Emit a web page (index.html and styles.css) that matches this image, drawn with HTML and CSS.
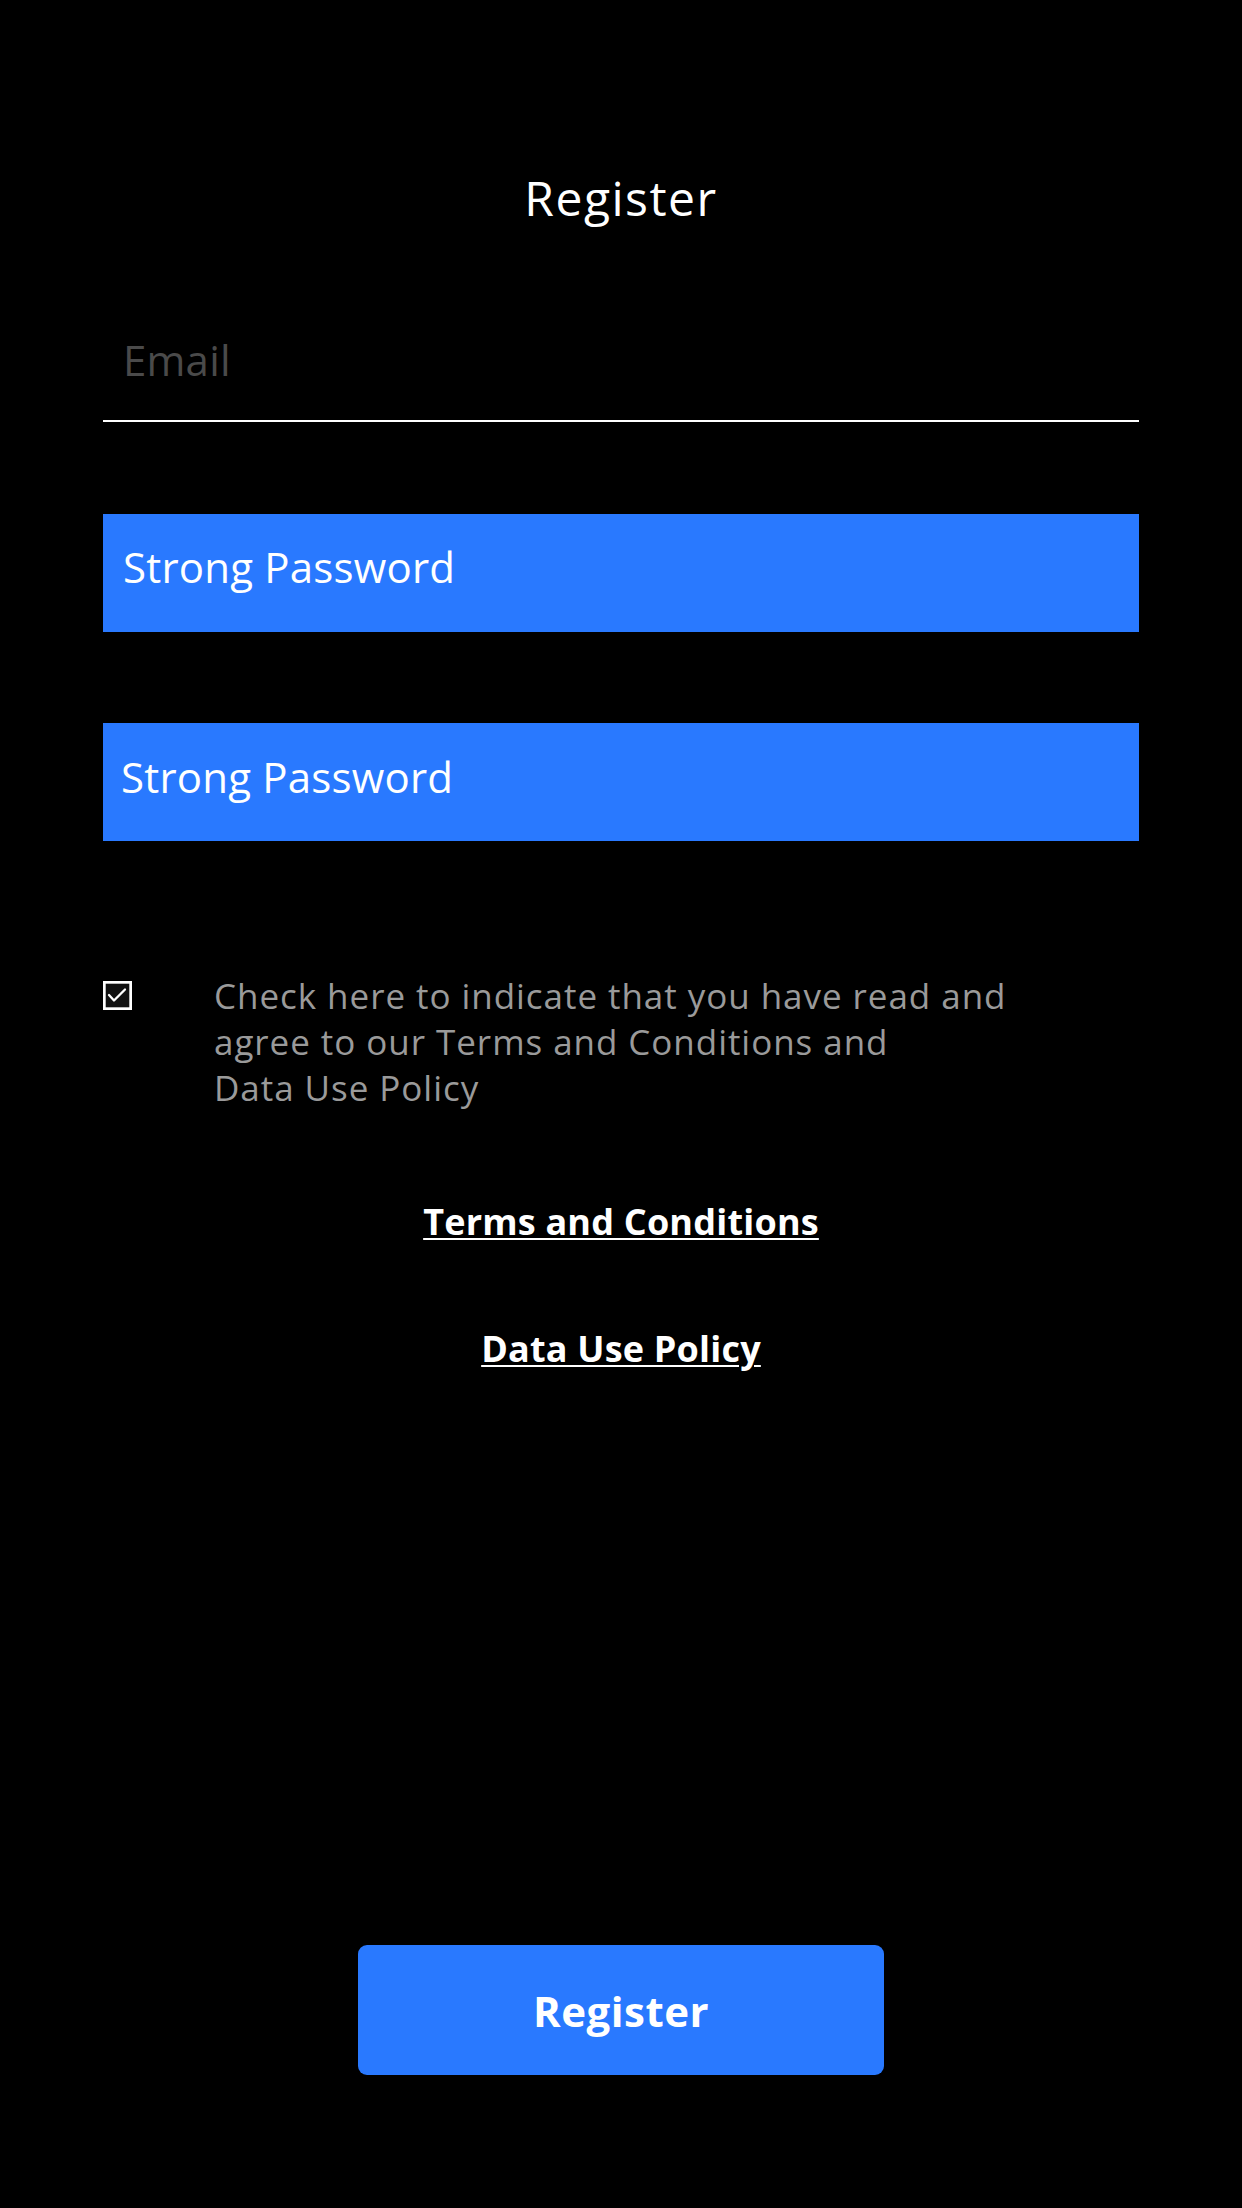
FILE: index.html
```html
<!DOCTYPE html>
<html lang="en">
<head>
<meta charset="utf-8">
<title>Register</title>
<link rel="stylesheet" href="styles.css">
</head>
<body>
<main class="page">
  <h1 class="title">Register</h1>
  <div class="field field-line"><span class="placeholder">Email</span></div>
  <div class="field field-filled"><span class="value">Strong Password</span></div>
  <div class="field field-filled field-second"><span class="value">Strong Password</span></div>
  <div class="agree">
    <svg class="checkbox" width="29" height="29" viewBox="0 0 29 29" aria-hidden="true">
      <rect x="1.35" y="1.35" width="26.3" height="26.3" fill="#111" stroke="#fff" stroke-width="2.7"/>
      <polyline points="6,14 11,19.5 22,8.5" fill="none" stroke="#fff" stroke-width="2.3" stroke-linecap="round" stroke-linejoin="round"/>
    </svg>
    <p class="agree-text">Check here to indicate that you have read and<br>agree to our Terms and Conditions and<br>Data Use Policy</p>
  </div>
  <a class="link link-terms" href="#">Terms and Conditions</a>
  <a class="link link-policy" href="#">Data Use Policy</a>
  <button class="submit" type="button">Register</button>
</main>
</body>
</html>
```
FILE: styles.css
```css
html, body {
  margin: 0;
  padding: 0;
  background: #000;
}
body {
  font-family: "Open Sans", "Noto Sans", sans-serif;
  color: #fff;
  width: 1242px;
  min-height: 2208px;
}
.page {
  display: flex;
  flex-direction: column;
  padding: 166px 103px 0;
}
.title {
  margin: 0;
  font-size: 48px;
  font-weight: 400;
  line-height: 64px;
  letter-spacing: 1.5px;
  text-align: center;
}
.field {
  box-sizing: border-box;
  height: 118px;
  padding: 28px 20px 0;
  font-size: 42px;
  line-height: 50px;
  letter-spacing: 0.2px;
}
.field-line {
  margin-top: 74px;
  padding-top: 31px;
  border-bottom: 2px solid #fff;
}
.placeholder {
  color: #4a4a4a;
}
.field-filled {
  margin-top: 92px;
  background: #2979ff;
  color: #fff;
}
.field-second {
  margin-top: 91px;
  padding-top: 29px;
  padding-left: 18px;
}
.agree {
  display: flex;
  align-items: flex-start;
  margin-top: 132px;
}
.checkbox {
  flex: none;
  margin: 8px 0 0 0;
}
.agree-text {
  margin: 0 0 0 82px;
  font-size: 35px;
  line-height: 46px;
  color: #9a9a9a;
  letter-spacing: 0.95px;
}
.link {
  align-self: center;
  color: #fff;
  font-size: 36px;
  font-weight: 700;
  line-height: 46px;
  text-decoration: underline;
  text-decoration-thickness: 2px;
  text-underline-offset: 3px;
  letter-spacing: 0.2px;
}
.link-terms {
  margin-top: 88px;
}
.link-policy {
  margin-top: 81px;
}
.submit {
  align-self: center;
  margin-top: 573px;
  width: 526px;
  height: 130px;
  border: none;
  border-radius: 9px;
  background: #2979ff;
  color: #fff;
  font-family: "Open Sans", "Noto Sans", sans-serif;
  font-size: 42px;
  font-weight: 700;
  letter-spacing: 0.5px;
  padding: 0;
}
```
